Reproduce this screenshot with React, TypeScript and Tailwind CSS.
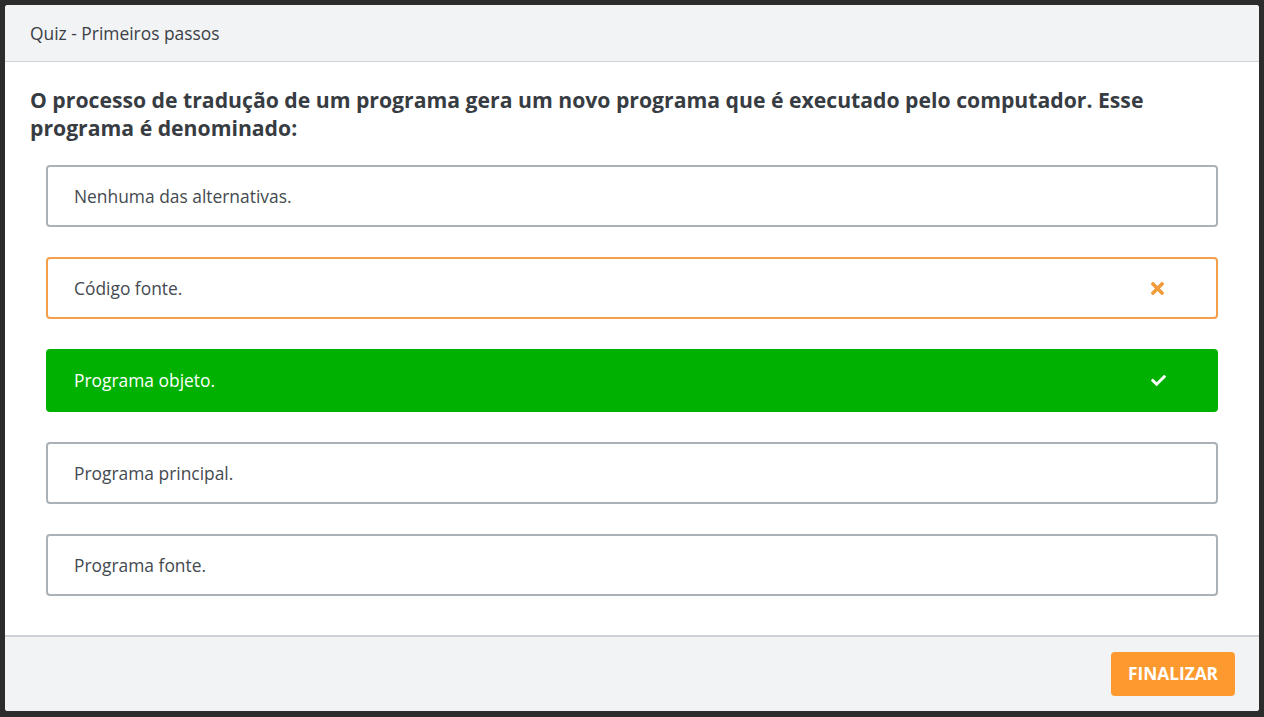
import { FaCheck, FaTimes } from "react-icons/fa";

type Option = {
  label: string;
  state?: "wrong" | "right";
};

const options: Option[] = [
  { label: "Nenhuma das alternativas." },
  { label: "Código fonte.", state: "wrong" },
  { label: "Programa objeto.", state: "right" },
  { label: "Programa principal." },
  { label: "Programa fonte." },
];

function OptionRow({ label, state }: Option) {
  const base =
    "flex h-[62px] items-center justify-between rounded-[4px] border-2 pl-[26px] text-[17.4px]";
  if (state === "right") {
    return (
      <div className={`${base} h-[63px] border-[#01b101] bg-[#01b101] pr-[50px] text-white`}>
        <span>{label}</span>
        <FaCheck className="h-[15px] w-[15px] text-white" />
      </div>
    );
  }
  if (state === "wrong") {
    return (
      <div className={`${base} border-[#f4a04a] pr-[49px] text-[#444a50]`}>
        <span>{label}</span>
        <FaTimes className="h-[19px] w-[19px] text-[#f39a3a]" />
      </div>
    );
  }
  return (
    <div className={`${base} border-[#aab1b8] text-[#444a50]`}>
      <span>{label}</span>
    </div>
  );
}

export default function App() {
  return (
    <div
      className="h-[717px] w-full bg-[#2c2c2c] px-[5px] pt-[5px] pb-[6px]"
      style={{ fontFamily: '"Open Sans", "Noto Sans", sans-serif' }}
    >
      <div className="flex h-full flex-col overflow-hidden rounded-[3px] bg-white">
        {/* Cabeçalho */}
        <div className="flex h-[57px] shrink-0 items-center border-b border-[#cdd0d4] bg-[#f2f3f5] px-[25px] text-[17.4px] text-[#3b4046]">
          Quiz - Primeiros passos
        </div>

        {/* Pergunta */}
        <div className="flex-1 px-[25px] pt-[24px]">
          <h2 className="text-[21.2px] font-bold leading-[28px] text-[#373c42]">
            O processo de tradução de um programa gera um novo programa que é
            executado pelo computador. Esse programa é denominado:
          </h2>
          <div className="mt-[23px] flex flex-col gap-[30px] px-[16px]">
            {options.map((o) => (
              <OptionRow key={o.label} {...o} />
            ))}
          </div>
        </div>

        {/* Rodapé */}
        <div className="flex h-[76px] shrink-0 items-start justify-end border-t-2 border-[#cdd0d4] bg-[#f2f3f5] px-[24px] pt-[15px]">
          <button
            type="button"
            className="h-[44px] w-[124px] rounded-[4px] bg-[#fd9a2f] text-[17.3px] font-bold text-white"
          >
            FINALIZAR
          </button>
        </div>
      </div>
    </div>
  );
}
